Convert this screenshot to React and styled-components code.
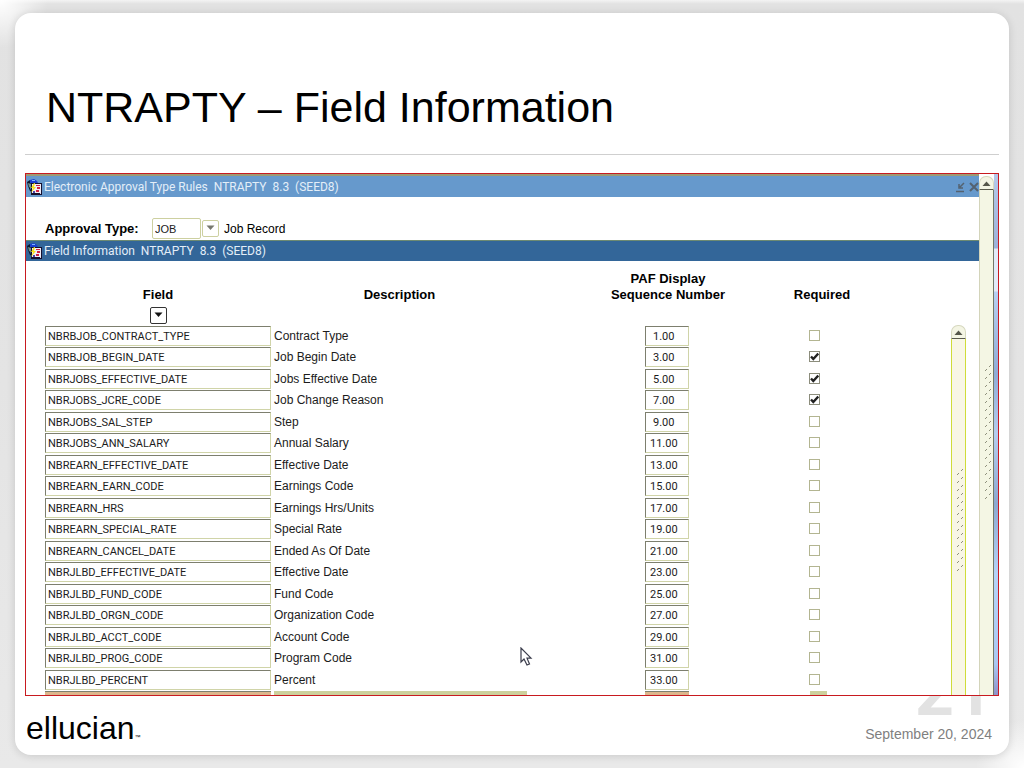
import React from "react";
import styled, { createGlobalStyle } from "styled-components";

const rows = [
  { field: "NBRBJOB_CONTRACT_TYPE", description: "Contract Type", sequence: "1.00" },
  { field: "NBRBJOB_BEGIN_DATE", description: "Job Begin Date", sequence: "3.00", required: true },
  { field: "NBRJOBS_EFFECTIVE_DATE", description: "Jobs Effective Date", sequence: "5.00", required: true },
  { field: "NBRJOBS_JCRE_CODE", description: "Job Change Reason", sequence: "7.00", required: true },
  { field: "NBRJOBS_SAL_STEP", description: "Step", sequence: "9.00" },
  { field: "NBRJOBS_ANN_SALARY", description: "Annual Salary", sequence: "11.00" },
  { field: "NBREARN_EFFECTIVE_DATE", description: "Effective Date", sequence: "13.00" },
  { field: "NBREARN_EARN_CODE", description: "Earnings Code", sequence: "15.00" },
  { field: "NBREARN_HRS", description: "Earnings Hrs/Units", sequence: "17.00" },
  { field: "NBREARN_SPECIAL_RATE", description: "Special Rate", sequence: "19.00" },
  { field: "NBREARN_CANCEL_DATE", description: "Ended As Of Date", sequence: "21.00" },
  { field: "NBRJLBD_EFFECTIVE_DATE", description: "Effective Date", sequence: "23.00" },
  { field: "NBRJLBD_FUND_CODE", description: "Fund Code", sequence: "25.00" },
  { field: "NBRJLBD_ORGN_CODE", description: "Organization Code", sequence: "27.00" },
  { field: "NBRJLBD_ACCT_CODE", description: "Account Code", sequence: "29.00" },
  { field: "NBRJLBD_PROG_CODE", description: "Program Code", sequence: "31.00" },
  { field: "NBRJLBD_PERCENT", description: "Percent", sequence: "33.00" },
];

const FormIcon = () => (
  <svg width="16" height="16" viewBox="0 0 16 16" aria-hidden="true">
    <path d="M0 3L3 1L4 4L3 9L5 13L3 12L1 7Z" fill="#0b1830" />
    <path d="M3 1L7 0L10 2L11 4L6 5L3 4Z" fill="#1a3fd0" />
    <path d="M5 1H8V2H5Z" fill="#7fb2ff" />
    <path d="M1 4L4 5L4 9L2 8Z" fill="#6f8f8a" />
    <rect x="4" y="4" width="11" height="12" fill="#14102e" />
    <rect x="5" y="5" width="9" height="9" fill="#f1eef8" />
    <path d="M9 6H13V7H9ZM10 8H13V10H10ZM9 11H12V13H9Z" fill="#d22343" />
    <path d="M6 12H8V14H6Z" fill="#4b46a8" />
    <path d="M7 4L4 9H6L4 14L9 8H7L8 4Z" fill="#f7e21c" />
    <path d="M13 14H14V15H13Z" fill="#d8d8f0" />
  </svg>
);

const Arrow = ({ up, color = "#111" }) => (
  <svg width="9" height="6" viewBox="0 0 9 6" aria-hidden="true">
    <path d={up ? "M4.5 0.5L8.5 5H0.5Z" : "M0.5 0.5H8.5L4.5 5Z"} fill={color} />
  </svg>
);

const Grip = ({ count }) => (
  <svg width="10" height={count * 8} aria-hidden="true">
    {Array.from({ length: count }, (_, i) => (
      <path
        key={i}
        d={`M2 ${i * 8 + 6}L4 ${i * 8 + 4}M6 ${i * 8 + 2}L8 ${i * 8}`}
        stroke="#8f907c"
        strokeWidth="1"
      />
    ))}
  </svg>
);

const App = () => {
  return (
    <>
      <GlobalStyle />
      <Page>
        <Slide>
          <Title>NTRAPTY – Field Information</Title>
          <Rule />
          <Panel>
            <Form>
              <FormBar $top>
                <FormIcon />
                <BarTitle>{"Electronic Approval Type Rules  NTRAPTY  8.3  (SEED8)"}</BarTitle>
                <BarButton aria-label="Minimize">
                  <svg width="12" height="12" viewBox="0 0 12 12">
                    <path d="M2 10.5H10M10 2L6 6M5 3V7H9" stroke="#54626f" strokeWidth="1.5" fill="none" />
                  </svg>
                </BarButton>
                <BarButton aria-label="Close">
                  <svg width="10" height="10" viewBox="0 0 10 10">
                    <path d="M1 1L9 9M9 1L1 9" stroke="#54626f" strokeWidth="2" />
                  </svg>
                </BarButton>
              </FormBar>
              <KeyBlock>
                <KeyLabel htmlFor="approval-type">Approval Type:</KeyLabel>
                <KeyInput id="approval-type" defaultValue="JOB" />
                <ListButton $muted aria-label="List approval types">
                  <Arrow color="#77786e" />
                </ListButton>
                <KeyText>Job Record</KeyText>
              </KeyBlock>
              <FormBar>
                <FormIcon />
                <BarTitle>{"Field Information  NTRAPTY  8.3  (SEED8)"}</BarTitle>
              </FormBar>
              <Block>
                <Table>
                  <colgroup>
                    <Col $width="228px" />
                    <Col />
                    <Col $width="156px" />
                    <Col $width="152px" />
                  </colgroup>
                  <thead>
                    <tr>
                      <FieldHead>
                        Field
                        <ListButton aria-label="List fields">
                          <Arrow />
                        </ListButton>
                      </FieldHead>
                      <DescriptionHead>Description</DescriptionHead>
                      <Head>
                        PAF Display
                        <br />
                        Sequence Number
                      </Head>
                      <Head>Required</Head>
                    </tr>
                  </thead>
                  <tbody>
                    {rows.map((row) => (
                      <Row key={row.field}>
                        <Cell>
                          <FieldInput defaultValue={row.field} aria-label="Field" />
                        </Cell>
                        <Cell>{row.description}</Cell>
                        <Cell $center $right={2}>
                          <NumberInput
                            defaultValue={row.sequence}
                            $indent={row.sequence.length < 5}
                            aria-label={`Sequence number, ${row.description}`}
                          />
                        </Cell>
                        <Cell $center $right={16}>
                          <Check
                            type="checkbox"
                            defaultChecked={row.required}
                            aria-label={`${row.description} required`}
                          />
                        </Cell>
                      </Row>
                    ))}
                    <CutRow>
                      <Cell><CutBar $width="226px" $lined /></Cell>
                      <Cell><CutBar $width="253px" /></Cell>
                      <Cell $right={2}><CutBar $width="44px" $lined $center /></Cell>
                      <Cell $right={8}><CutBar $width="17px" $center /></Cell>
                    </CutRow>
                  </tbody>
                </Table>
                <Scroll $inner>
                  <ScrollButton aria-label="Scroll rows up">
                    <Arrow up color="#55564a" />
                  </ScrollButton>
                  <Track $inner>
                    <Grip count={13} />
                  </Track>
                </Scroll>
              </Block>
            </Form>
            <Scroll>
              <ScrollButton aria-label="Scroll form up">
                <Arrow up color="#55564a" />
              </ScrollButton>
              <Track>
                <Grip count={17} />
              </Track>
            </Scroll>
            <Desktop />
            <Pointer width="14" height="20" viewBox="0 0 14 20" aria-hidden="true">
              <path
                d="M2 1V15L5 12L8 18L10.5 17L8 11.2H12Z"
                fill="#fff"
                stroke="#3b3d4c"
                strokeWidth="1.2"
              />
            </Pointer>
          </Panel>
          <Footer>
            <Logo>
              ellucian<LogoMark>™</LogoMark>
            </Logo>
            <DateText>September 20, 2024</DateText>
            <SlideNumber>21</SlideNumber>
          </Footer>
        </Slide>
      </Page>
    </>
  );
};

const GlobalStyle = createGlobalStyle`
  * {
    box-sizing: border-box;
  }
  body {
    margin: 0;
    font-family: "Liberation Sans", Arial, sans-serif;
    color: #000;
  }
  button, input {
    margin: 0;
    font-family: inherit;
  }
`

const Page = styled.div`
  min-height: 100vh;
  padding: 13px 15px;
  background:
    radial-gradient(circle at 0 0, #fff, rgba(255, 255, 255, 0) 48px),
    radial-gradient(circle at 100% 100%, #fff, rgba(255, 255, 255, 0) 48px),
    linear-gradient(#f4f4f4, #e2e2e2 4px, #e4e4e4 50%, #e9e9e9);
`

const Slide = styled.main`
  position: relative;
  padding: 0 10px;
  background: #fff;
  border-radius: 16px;
  box-shadow: 0 1px 8px rgba(0, 0, 0, 0.14);
`

const Title = styled.h1`
  margin: 0;
  padding: 70px 21px 23px;
  font-size: 43px;
  font-weight: 400;
  line-height: 48px;
`

const Rule = styled.hr`
  height: 1px;
  margin: 0 0 18px;
  border: 0;
  background: #cfcfcf;
`

const Panel = styled.section`
  position: relative;
  z-index: 1;
  display: flex;
  border: 1px solid #c81a20;
  background: #fff;
`

const Form = styled.div`
  flex: 1;
  min-width: 0;
`

const FormBar = styled.header`
  display: flex;
  align-items: center;
  height: ${(p) => (p.$top ? "23px" : "21px")};
  padding: 0 0 0 1px;
  border-top: ${(p) => (p.$top ? "2px solid #9c9a74" : "1px solid #6d8a72")};
  background: ${(p) => (p.$top ? "#6699cc" : "#336699")};
`

const BarTitle = styled.h2`
  flex: 1;
  margin: 0;
  padding-left: 1px;
  font-family: Roboto, "Liberation Sans", sans-serif;
  font-size: 12px;
  font-weight: 400;
  line-height: 16px;
  white-space: pre;
  color: #e3eef8;
`

const BarButton = styled.button`
  display: flex;
  margin-left: 3px;
  padding: 0;
  border: 0;
  background: none;
`

const KeyBlock = styled.div`
  display: flex;
  align-items: center;
  height: 43px;
  padding: 20px 0 0 19px;
`

const KeyLabel = styled.label`
  width: 107px;
  font-size: 13px;
  font-weight: 700;
`

const KeyInput = styled.input`
  width: 49px;
  height: 21px;
  padding: 0 2px;
  border: 1px solid #cdd0a0;
  border-radius: 2px;
  background: #fff;
  font-size: 11px;
  color: #222;
`

const ListButton = styled.button`
  display: flex;
  align-items: center;
  justify-content: center;
  width: 17px;
  height: 17px;
  margin: ${(p) => (p.$muted ? "0 5px 0 1px" : "4px auto 0")};
  padding: 0 0 2px;
  border: 1px solid ${(p) => (p.$muted ? "#cdd0a0" : "#333")};
  border-radius: 2px;
  background: #fff;
`

const KeyText = styled.span`
  font-size: 12px;
`

const Block = styled.div`
  display: flex;
  padding: 0 13px 0 19px;
`

const Table = styled.table`
  flex: 1;
  width: 100%;
  min-width: 0;
  table-layout: fixed;
  border-collapse: collapse;
`

const Col = styled.col`
  width: ${(p) => p.$width || "auto"};
`

const Head = styled.th`
  height: 65px;
  padding: 0 0 23px;
  vertical-align: bottom;
  font-size: 13px;
  font-weight: 700;
  line-height: 16px;
`

const FieldHead = styled(Head)`
  padding: 0 2px 2px 0;
`

const DescriptionHead = styled(Head)`
  padding-right: 64px;
`

const Row = styled.tr`
  height: 21px;
  &:nth-child(even) {
    height: 22px;
  }
`

const Cell = styled.td`
  padding: 0 ${(p) => p.$right || 0}px 0 0;
  vertical-align: top;
  text-align: ${(p) => (p.$center ? "center" : "left")};
  font-size: 12px;
  line-height: 21px;
  color: #1c1c1c;
  &:nth-child(2) {
    padding-left: 1px;
  }
`

const FieldInput = styled.input`
  display: block;
  width: 226px;
  height: 20px;
  padding: 1px 2px 0;
  border: 1px solid;
  border-color: #7d7f6e #d0d4a8 #d0d4a8 #7d7f6e;
  background: #fff;
  font-family: Roboto, "Liberation Sans", sans-serif;
  font-size: 11px;
  color: #1c1c1c;
`

const NumberInput = styled(FieldInput)`
  width: 44px;
  margin: 0 auto;
  padding-left: ${(p) => (p.$indent ? "7px" : "4px")};
`

const Check = styled.input`
  appearance: none;
  display: block;
  width: 11px;
  height: 11px;
  margin: 4px auto 0;
  border: 1px solid #b3b591;
  background: #fff;
  &:checked {
    border-color: #8c8d7c;
    background: url("data:image/svg+xml,%3Csvg xmlns='http://www.w3.org/2000/svg' viewBox='0 0 9 9'%3E%3Cpath d='M1 4.5L3.3 7L8.3 1.5' fill='none' stroke='%23222' stroke-width='2.4'/%3E%3C/svg%3E") center / 9px 9px no-repeat;
  }
`

const CutRow = styled.tr`
  height: 4px;
`

const CutBar = styled.div`
  width: ${(p) => p.$width};
  max-width: 100%;
  height: 4px;
  margin: ${(p) => (p.$center ? "0 auto" : "0")};
  border-top: ${(p) => (p.$lined ? "1px solid #7d7f6e" : "0")};
  background: ${(p) => (p.$lined ? "#dcb68c" : "#ccd09c")};
`

const Scroll = styled.div`
  display: flex;
  flex-direction: column;
  width: 15px;
  margin: ${(p) => (p.$inner ? "64px 0 0 53px" : "2px 0 0")};
`

const ScrollButton = styled.button`
  display: flex;
  align-items: center;
  justify-content: center;
  height: 14px;
  padding: 2px 0 0;
  border: 1px solid #d6d8bf;
  border-bottom-color: #5a5b4c;
  border-radius: 7px 7px 0 0;
  background: #f4f5e4;
`

const Track = styled.div`
  flex: 1;
  padding: ${(p) => (p.$inner ? "130px 0 0 3px" : "175px 0 0 3px")};
  border: solid;
  border-width: 0 1px;
  border-color: ${(p) => (p.$inner ? "#cfdc3a" : "#d3d4ba #74786a")};
  background: ${(p) => (p.$inner ? "#f8f6e6" : "#f4f6e4")};
  border-left-color: ${(p) => (p.$inner ? "#cfdc3a" : "#d3d4ba")};
`

const Desktop = styled.div`
  width: 4px;
  background: linear-gradient(
    #b4c8ea,
    #9db2da 74px,
    #e2ebfa 75px,
    #e2ebfa 117px,
    #b8d0f2 118px,
    #8fabd6 200px,
    #b5cdef 260px,
    #8ca8d0 330px,
    #b5d3f8 400px,
    #a9c8f2 490px,
    #8d92c8
  );
`

// the mouse pointer sits over the form
const Pointer = styled.svg`
  position: absolute;
  left: 493px;
  top: 473px;
`

const Footer = styled.footer`
  display: flex;
  justify-content: space-between;
  height: 59px;
  padding: 0 7px 0 1px;
`

const Logo = styled.div`
  padding-top: 14px;
  font-size: 32px;
  line-height: 36px;
`

const LogoMark = styled.span`
  font-size: 6px;
`

const DateText = styled.time`
  padding-top: 30px;
  font-size: 14px;
  line-height: 16px;
  color: #7f7f7f;
`

// half hidden behind the panel
const SlideNumber = styled.span`
  position: absolute;
  right: 16px;
  bottom: 39px;
  font-family: Roboto, "Liberation Sans", sans-serif;
  font-size: 68px;
  font-weight: 700;
  line-height: 48px;
  color: #e2e2e2;
`

export default App;
